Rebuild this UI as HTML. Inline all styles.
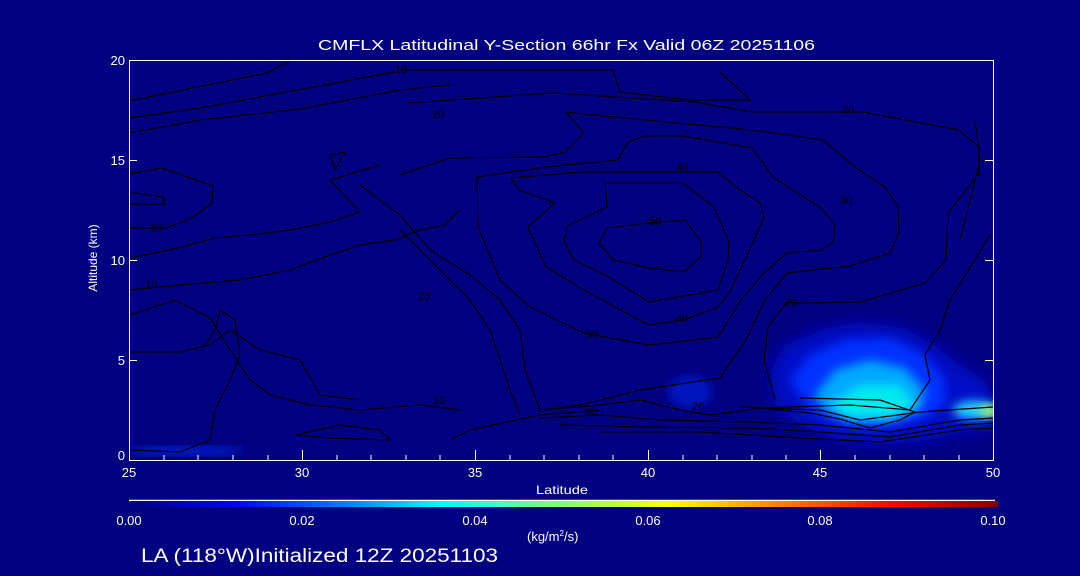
<!DOCTYPE html>
<html><head><meta charset="utf-8"><style>
html,body{margin:0;padding:0;background:#000080;}
svg{display:block}
text{font-family:"Liberation Sans",sans-serif;fill:#fff}
</style></head><body>
<svg width="1080" height="576" viewBox="0 0 1080 576" xmlns="http://www.w3.org/2000/svg">
<defs>
<filter id="bl" x="-50%" y="-50%" width="200%" height="200%"><feGaussianBlur stdDeviation="8"/></filter>
<filter id="bl2" x="-50%" y="-50%" width="200%" height="200%"><feGaussianBlur stdDeviation="5"/></filter>
<linearGradient id="cb" x1="0" x2="1">
<stop offset="0" stop-color="#000080"/><stop offset="0.12" stop-color="#0000ff"/>
<stop offset="0.25" stop-color="#0080ff"/><stop offset="0.36" stop-color="#00ffff"/>
<stop offset="0.5" stop-color="#80ff80"/><stop offset="0.62" stop-color="#ffff00"/>
<stop offset="0.75" stop-color="#ff8000"/><stop offset="0.88" stop-color="#ff0000"/>
<stop offset="1" stop-color="#800000"/></linearGradient>
<clipPath id="pc"><rect x="129" y="60" width="864" height="400"/></clipPath>
</defs>
<rect width="1080" height="576" fill="#000080"/>
<g clip-path="url(#pc)">
<path d="M770,370 785,345 820,330 860,322 905,328 935,345 960,365 985,380 993,395 993,430 960,432 930,440 880,445 840,440 800,425 775,405Z" fill="#0008c8" filter="url(#bl)"/>
<path d="M790,380 810,355 845,340 890,338 925,355 945,380 945,405 920,420 880,428 840,425 810,410Z" fill="#0030ff" filter="url(#bl2)"/>
<path d="M815,395 835,370 870,360 905,368 925,390 920,410 890,420 850,420 825,410Z" fill="#00a8ff" filter="url(#bl2)"/>
<path d="M830,405 860,385 900,385 915,405 890,418 850,418Z" fill="#00eaf0" filter="url(#bl2)"/>
<ellipse cx="975" cy="410" rx="22" ry="9" fill="#20d8ff" filter="url(#bl2)"/>
<ellipse cx="990" cy="411" rx="10" ry="5" fill="#d0ff50" filter="url(#bl2)"/>
<ellipse cx="690" cy="392" rx="22" ry="16" fill="#0018c0" filter="url(#bl2)"/>
<ellipse cx="185" cy="451" rx="60" ry="3" fill="#0030ff" filter="url(#bl2)"/>
</g>
<g fill="none" stroke="#000" stroke-width="1.2" clip-path="url(#pc)">
<path d="M599,243 607,228 649,223 685,220 701,242 701,257 684,272 649,268 613,260Z"/>
<path d="M605,183 683,183 714,207 729,242 728,260 718,290 649,302 609,277 574,260 564,242 567,226 607,207Z"/>
<path d="M511,178 580,172 718,172 737,188 760,203 764,217 751,247 729,293 718,307 683,320 649,325 615,307 584,290 546,267 528,227 555,203 519,190Z"/>
<path d="M477,177 546,167 618,160 628,142 645,136 683,136 752,148 774,178 821,208 835,225 833,242 821,250 787,253 764,273 741,300 718,337 649,345 584,333 530,307 500,280 478,227Z"/>
<path d="M400,175 450,158 545,157 565,152 584,133 566,112 645,120 752,130 823,140 855,167 885,187 898,207 899,232 890,253 850,266 787,273 765,300 746,340 720,378 640,390 580,405 545,410"/>
<path d="M408,103 553,93 695,102 752,112 833,112 863,112 959,130 979,147 979,173 948,213 946,260 925,283 860,302 800,303 787,302 768,327 764,360 775,400"/>
<path d="M400,70 613,70 620,92 690,100 750,100 720,72"/>
<path d="M129,101 267,73 295,58"/><path d="M129,118 200,108 395,72"/>
<path d="M129,133 200,120 300,109 400,90 450,85"/>
<path d="M129,174 162,168 213,186 212,203 192,218 166,228 129,228"/>
<path d="M129,192 163,197 165,204 129,204"/>
<path d="M129,258 170,250 215,238 250,235 290,230 330,222 360,212 330,180 380,165"/>
<path d="M129,290 180,285 240,280 290,270 330,255 360,245 395,240 420,230 445,225 460,210"/>
<path d="M129,315 175,300 210,318 230,350 250,380 270,395 310,405 360,410 420,405 460,410"/>
<path d="M129,352 180,352 210,345 230,330 260,350 300,360 320,395 360,400"/>
<path d="M129,450 180,452 210,440 215,410 230,380 240,355 235,320 220,310 215,330 205,345"/>
<path d="M330,155 345,152 335,170Z"/>
<path d="M360,185 400,215 430,250 470,275 500,300 520,330 525,370 540,410"/>
<path d="M400,230 440,270 470,300 490,330 500,360 510,390 520,415"/>
<path d="M295,435 340,425 380,430 390,440 330,438 295,435"/>
<path d="M450,440 470,430 540,415 600,410"/>
<path d="M538,410 600,405 640,400 680,410 710,415 760,408 850,405 910,410 930,380 925,355 940,330 950,300 990,235"/>
<path d="M740,407 820,410 860,420 920,412 993,407"/>
<path d="M540,418 600,415 660,420 750,422 820,425 890,432 960,420 993,418"/>
<path d="M560,425 650,427 750,428 820,432 890,437 960,425 993,423"/>
<path d="M600,432 700,432 800,438 880,442 960,430 993,428"/>
<path d="M760,408 810,413 840,419 870,428 900,420 915,412 880,400 800,398"/>
<path d="M975,120 980,160 970,200 960,240"/>
</g>
<g font-size="11">
<text x="649" y="225" style="fill:#000">50</text><text x="676" y="171" style="fill:#000">40</text>
<text x="676" y="322" style="fill:#000">40</text><text x="586" y="338" style="fill:#000">30</text>
<text x="840" y="204" style="fill:#000">30</text><text x="842" y="113" style="fill:#000">20</text>
<text x="785" y="306" style="fill:#000">20</text><text x="432" y="118" style="fill:#000">20</text>
<text x="150" y="232" style="fill:#000">20</text><text x="145" y="288" style="fill:#000">10</text>
<text x="418" y="300" style="fill:#000">20</text><text x="433" y="404" style="fill:#000">10</text>
<text x="585" y="416" style="fill:#000">20</text><text x="692" y="410" style="fill:#000">20</text>
<text x="395" y="73" style="fill:#000">10</text>
</g>
<g stroke="#fff" stroke-width="1" fill="none">
<rect x="129.5" y="60.5" width="864" height="400"/>
</g>
<g stroke="#fff" stroke-width="1">
<path d="M129.5,460v-10M302.5,460v-10M475.5,460v-10M648.5,460v-10M820.5,460v-10M993.5,460v-10"/>
<path d="M164,460v-5M198,460v-5M233,460v-5M268,460v-5M337,460v-5M371,460v-5M406,460v-5M440,460v-5M510,460v-5M544,460v-5M579,460v-5M613,460v-5M683,460v-5M717,460v-5M752,460v-5M786,460v-5M855,460v-5M890,460v-5M924,460v-5M959,460v-5"/>
<path d="M129,160.5h8M129,260.5h8M129,360.5h8M993,160.5h-8M993,260.5h-8M993,360.5h-8"/>
<path d="M129,500.5h866" stroke-width="1.5"/>
</g>
<rect x="130" y="501" width="868" height="6" fill="url(#cb)"/>
<g font-size="13">
<text x="318" y="50" font-size="14.5" textLength="497" lengthAdjust="spacingAndGlyphs">CMFLX Latitudinal Y-Section 66hr  Fx Valid 06Z 20251106</text>
<text x="125" y="65" text-anchor="end">20</text><text x="125" y="165" text-anchor="end">15</text>
<text x="125" y="265" text-anchor="end">10</text><text x="125" y="365" text-anchor="end">5</text>
<text x="125" y="460" text-anchor="end">0</text>
<text x="129" y="477" text-anchor="middle">25</text><text x="302" y="477" text-anchor="middle">30</text>
<text x="475" y="477" text-anchor="middle">35</text><text x="648" y="477" text-anchor="middle">40</text>
<text x="820" y="477" text-anchor="middle">45</text><text x="993" y="477" text-anchor="middle">50</text>
<text x="536" y="494" font-size="12" textLength="52" lengthAdjust="spacingAndGlyphs">Latitude</text>
<text transform="translate(97,258) rotate(-90)" text-anchor="middle" font-size="12">Altitude (km)</text>
<text x="129" y="525" text-anchor="middle">0.00</text><text x="302" y="525" text-anchor="middle">0.02</text>
<text x="475" y="525" text-anchor="middle">0.04</text><text x="648" y="525" text-anchor="middle">0.06</text>
<text x="820" y="525" text-anchor="middle">0.08</text><text x="993" y="525" text-anchor="middle">0.10</text>
<text x="527" y="541">(kg/m<tspan font-size="8" dy="-5">2</tspan><tspan dy="5">/s)</tspan></text>
<text x="141" y="562" font-size="19" textLength="357" lengthAdjust="spacingAndGlyphs">LA (118°W)Initialized 12Z 20251103</text>
</g>
</svg>
</body></html>
